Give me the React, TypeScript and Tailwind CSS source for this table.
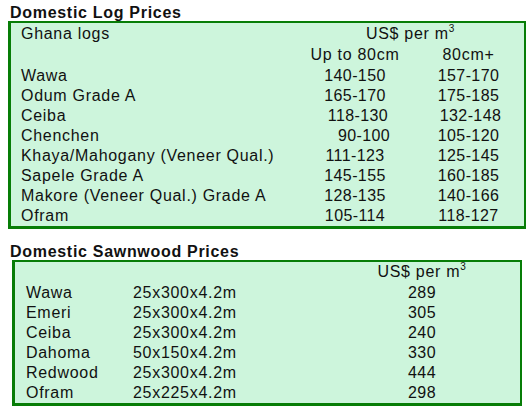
const logs: [string, string, string, string?][] = [
  ["Wawa", "140-150", "157-170"],
  ["Odum Grade A", "165-170", "175-185"],
  ["Ceiba", "118-130", "132-148", "b"],
  ["Chenchen", "90-100", "105-120", "a"],
  ["Khaya/Mahogany (Veneer Qual.)", "111-123", "125-145"],
  ["Sapele Grade A", "145-155", "160-185"],
  ["Makore (Veneer Qual.) Grade A", "128-135", "140-166"],
  ["Ofram", "105-114", "118-127"],
];

const sawn: [string, string, string][] = [
  ["Wawa", "25x300x4.2m", "289"],
  ["Emeri", "25x300x4.2m", "305"],
  ["Ceiba", "25x300x4.2m", "240"],
  ["Dahoma", "50x150x4.2m", "330"],
  ["Redwood", "25x300x4.2m", "444"],
  ["Ofram", "25x225x4.2m", "298"],
];

function PerM3() {
  return (
    <span>
      US$ per m<sup className="text-[10px] top-[-7px]">3</sup>
    </span>
  );
}

export default function App() {
  return (
    <div className="w-[531px] h-[415px] bg-white text-[#111] font-['Liberation_Sans',Arial,sans-serif] text-[16px] tracking-[0.7px]">
      {/* log prices */}
      <div className="pl-[10px] pt-[4px] h-[21px] leading-[17px] font-bold">Domestic Log Prices</div>
      <div className="ml-[8px] w-[518px] bg-[#cdf5dc] border-[#077d07] border-t-2 border-l-[3px] border-r-2 border-b-[3px] pt-px">
        <div className="grid grid-cols-[286px_116px_111px] leading-[20px]">
          <div className="h-[21px] pl-[10px]">Ghana logs</div>
          <div className="h-[21px] col-span-2 text-center">
            <PerM3 />
          </div>
          <div className="h-[21px]" />
          <div className="h-[21px] text-center">Up to 80cm</div>
          <div className="h-[21px] text-center">80cm+</div>
          {logs.map(([name, a, b, shift]) => (
            <div key={name} className="contents">
              <div className="h-[20px] pl-[10px] whitespace-nowrap">{name}</div>
              <div className={`h-[20px] text-center tracking-[0.4px] ${shift === "a" ? "pl-[18px]" : shift === "b" ? "pl-[6px]" : ""}`}>{a}</div>
              <div className={`h-[20px] text-center tracking-[0.4px] ${shift === "b" ? "pl-[4px]" : ""}`}>{b}</div>
            </div>
          ))}
        </div>
      </div>

      {/* sawnwood prices */}
      <div className="pl-[10px] mt-[14px] h-[17px] leading-[17px] font-bold">Domestic Sawnwood Prices</div>
      <div className="ml-[12px] w-[510px] bg-[#cdf5dc] border-[#077d07] border-t-2 border-l-[3px] border-r-2 border-b-[3px]">
        <div className="grid grid-cols-[118px_197px_184px] leading-[20px]">
          <div className="h-[21px] col-span-2" />
          <div className="h-[21px] text-center">
            <PerM3 />
          </div>
          {sawn.map(([name, size, price]) => (
            <div key={name} className="contents">
              <div className="h-[20px] pl-[11px]">{name}</div>
              <div className="h-[20px]">{size}</div>
              <div className="h-[20px] text-center tracking-[0.4px]">{price}</div>
            </div>
          ))}
        </div>
      </div>
    </div>
  );
}
